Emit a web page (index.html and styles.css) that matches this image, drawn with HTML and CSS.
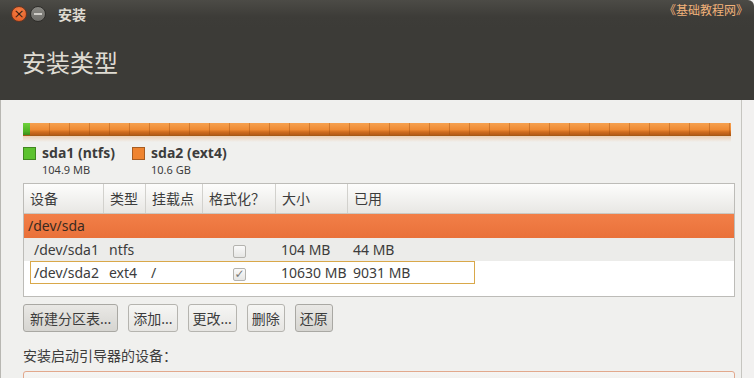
FILE: index.html
```html
<!DOCTYPE html>
<html lang="zh">
<head>
    <meta charset="UTF-8">
    <title>安装</title>
    <link rel="stylesheet" href="styles.css">
</head>
<body>
    <div class="window">
        <div class="titlebar">
            <span class="btn-close">×</span>
            <span class="btn-min"></span>
            <span class="title">安装</span>
            <span class="watermark">《基础教程网》</span>
        </div>
        <div class="header">
            <h1>安装类型</h1>
        </div>

        <div class="content">
            <div class="disk-bar">
                <div class="part part-green"></div>
                <div class="part part-orange"></div>
            </div>
            <div class="bar-reflect"></div>

            <div class="legend">
                <div class="legend-item">
                    <span class="swatch green"></span>
                    <div>
                        <div class="legend-name">sda1 (ntfs)</div>
                        <div class="legend-size">104.9 MB</div>
                    </div>
                </div>
                <div class="legend-item">
                    <span class="swatch orange"></span>
                    <div>
                        <div class="legend-name">sda2 (ext4)</div>
                        <div class="legend-size">10.6 GB</div>
                    </div>
                </div>
            </div>

            <div class="table">
                <div class="row head">
                    <div class="cell">设备</div>
                    <div class="cell">类型</div>
                    <div class="cell">挂载点</div>
                    <div class="cell">格式化？</div>
                    <div class="cell">大小</div>
                    <div class="cell last">已用</div>
                </div>
                <div class="row disk">
                    <div class="cell">/dev/sda</div>
                </div>
                <div class="row part-row odd">
                    <div class="cell dev">/dev/sda1</div>
                    <div class="cell">ntfs</div>
                    <div class="cell"></div>
                    <div class="cell center"><span class="check"></span></div>
                    <div class="cell">104 MB</div>
                    <div class="cell">44 MB</div>
                </div>
                <div class="row part-row selected">
                    <span class="focus"></span>
                    <div class="cell dev">/dev/sda2</div>
                    <div class="cell">ext4</div>
                    <div class="cell">/</div>
                    <div class="cell center"><span class="check checked">✓</span></div>
                    <div class="cell">10630 MB</div>
                    <div class="cell">9031 MB</div>
                </div>
            </div>

            <div class="buttons">
                <button class="dark wide">新建分区表...</button>
                <button>添加...</button>
                <button>更改...</button>
                <button>删除</button>
                <button class="dark">还原</button>
            </div>

            <p class="label">安装启动引导器的设备：</p>
            <div class="combo"></div>
        </div>
    </div>
</body>
</html>
```

FILE: styles.css
```css
body {
    margin: 0;
    background-color: #f2f1f0;
    font-family: "Noto Sans", "Noto Sans CJK SC", sans-serif;
    color: #3c3c3c;
    overflow: hidden;
}

.window {
    width: 754px;
}

.titlebar {
    height: 28px;
    background: linear-gradient(#4c4b46, #3d3c38 60%, #3c3b37);
    border-radius: 0 6px 0 0;
    display: flex;
    align-items: center;
    position: relative;
}

.btn-close {
    width: 16px;
    height: 16px;
    margin-left: 11px;
    border-radius: 50%;
    background: radial-gradient(circle at 50% 35%, #f6824a, #e0581f);
    border: 1px solid #6a3520;
    box-sizing: border-box;
    color: #3a1a0c;
    font-size: 13px;
    line-height: 13px;
    text-align: center;
    font-family: "DejaVu Sans", sans-serif;
}

.btn-min {
    width: 16px;
    height: 16px;
    margin-left: 3px;
    border-radius: 50%;
    background: linear-gradient(#8a8984, #6e6d69);
    border: 1px solid #2e2d2a;
    box-sizing: border-box;
    position: relative;
}

.btn-min::after {
    content: "";
    position: absolute;
    left: 3px;
    right: 3px;
    top: 6px;
    height: 2px;
    background: #cfcdc8;
}

.title {
    margin-left: 12px;
    color: #dfdbd2;
    font-size: 14px;
    font-weight: bold;
}

.watermark {
    position: absolute;
    right: 6px;
    top: 1px;
    color: #f2b27a;
    font-size: 12px;
}

.header {
    height: 72px;
    background-color: #3c3b37;
}

.header h1 {
    margin: 0;
    padding: 20px 0 0 22px;
    color: #dfdbd2;
    font-size: 24px;
    font-weight: normal;
    line-height: 30px;
}

.content {
    width: 742px;
    height: 278px;
    box-sizing: border-box;
    overflow: hidden;
    background-color: #f0f0ee;
    border-left: 1px solid #b8b7b2;
    border-right: 1px solid #c6c5c0;
    padding: 23px 9px 0 22px;
}

.disk-bar {
    display: flex;
    width: 708px;
    height: 12px;
    border-bottom: 1px solid #a65a17;
}

.part-green {
    width: 7px;
    background: linear-gradient(#6fd23c, #4fb122 70%, #3c8a1a);
}

.part-orange {
    flex: 1;
    background:
        repeating-linear-gradient(90deg, transparent 0 19px, rgba(150, 70, 10, 0.35) 19px 20px),
        linear-gradient(#f6a14f, #ef8b34 55%, #d06d1f 75%, #b45b18);
}

.bar-reflect {
    width: 708px;
    height: 6px;
    background: linear-gradient(rgba(230, 150, 80, 0.35), rgba(240, 240, 238, 0));
}

.legend {
    display: flex;
    gap: 17px;
    margin-top: 1px;
}

.legend-item {
    display: flex;
    gap: 6px;
}

.swatch {
    width: 11px;
    height: 11px;
    margin-top: 4px;
    border: 1px solid rgba(0, 0, 0, 0.3);
}

.swatch.green {
    background-color: #5cc22f;
}

.swatch.orange {
    background-color: #ef8430;
}

.legend-name {
    font-size: 14px;
    font-weight: bold;
    line-height: 19px;
}

.legend-size {
    font-size: 11px;
    line-height: 15px;
}

.table {
    width: 712px;
    height: 114px;
    box-sizing: border-box;
    margin-top: 6px;
    background-color: #fff;
    border: 1px solid #bdbcb8;
    font-size: 14px;
}

.row {
    display: grid;
    grid-template-columns: 80px 42px 57px 73px 72px 1fr;
    align-items: center;
    position: relative;
}

.row.head {
    height: 29px;
    background: linear-gradient(#fdfdfc, #e8e7e4);
    border-bottom: 1px solid #c9c8c3;
    font-family: "Noto Sans CJK SC", sans-serif;
}

.row.head .cell {
    border-right: 1px solid #d2d1cd;
    height: 29px;
    line-height: 29px;
    padding-left: 6px;
}

.row.head .cell.last {
    border-right: none;
}

.row.disk {
    display: block;
    height: 24px;
    line-height: 24px;
    background: linear-gradient(#f27f48, #e9713a);
    color: #3a2a20;
    padding-left: 4px;
}

.part-row {
    height: 23px;
    line-height: 23px;
}

.part-row .cell {
    padding-left: 5px;
}

.part-row .cell.dev {
    padding-left: 10px;
}

.part-row.odd {
    background-color: #ececea;
}

.cell.center {
    text-align: center;
    padding-left: 0;
}

.check {
    display: inline-block;
    width: 11px;
    height: 11px;
    border: 1px solid #b4b3af;
    border-radius: 2px;
    background: linear-gradient(#fafafa, #e6e6e4);
    vertical-align: middle;
    font-size: 12px;
    line-height: 11px;
    color: #7a7a78;
    text-align: center;
    font-family: "DejaVu Sans", sans-serif;
}

.focus {
    position: absolute;
    left: 6px;
    top: 0;
    width: 445px;
    height: 23px;
    box-sizing: border-box;
    border: 1px solid #d9a84a;
}

.buttons {
    display: flex;
    gap: 10px;
    margin-top: 7px;
}

button {
    height: 28px;
    padding: 0 4px;
    font-family: inherit;
    font-size: 14px;
    color: #3c3c3c;
    border: 1px solid #b5b4af;
    border-radius: 3px;
    background: linear-gradient(#f6f6f4, #e6e5e2);
}

button.wide {
    padding: 0 6px;
}

button.dark {
    background: linear-gradient(#e9e8e5, #d6d5d1);
    border-color: #a9a8a3;
}

.label {
    margin: 13px 0 0;
    font-size: 14px;
    line-height: 20px;
    font-family: "Noto Sans CJK SC", sans-serif;
}

.combo {
    width: 710px;
    height: 20px;
    margin-top: 6px;
    border: 1px solid #e2a88c;
    border-radius: 3px;
    background: linear-gradient(#f6f5f3, #eceae7);
}
```
